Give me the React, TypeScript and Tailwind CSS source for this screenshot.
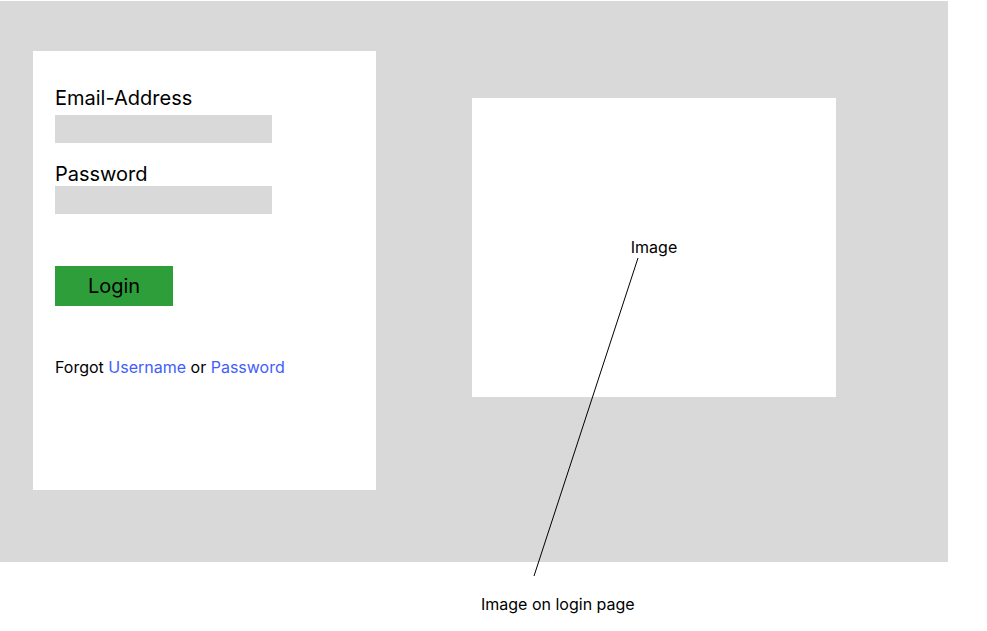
export default function App() {
  return (
    <main
      className="relative h-[631px] w-[987px] bg-white text-black"
      style={{ fontFamily: "Inter, 'Noto Sans', sans-serif" }}
    >
      {/* Gray canvas */}
      <section className="mt-px flex h-[561px] w-[948px] items-start bg-[#d9d9d9] pl-[33px] pt-[50px]">
        {/* Login card */}
        <div className="flex h-[439px] w-[343px] flex-col items-start bg-white pl-[22px] pt-[35px]">
          <label className="text-[20px] leading-[24px]">Email-Address</label>
          <div className="mt-[5px] h-[28px] w-[217px] bg-[#d9d9d9]" />
          <label className="mt-[19px] text-[20px] leading-[24px]">Password</label>
          <div className="h-[28px] w-[217px] bg-[#d9d9d9]" />
          <button className="mt-[52px] flex h-[40px] w-[118px] items-center justify-center bg-[#2e9e3a] text-[20px] leading-[24px] text-black">
            Login
          </button>
          <p className="mt-[49px] text-[16px] leading-[24px]">
            Forgot <span className="text-[#3f5efb]">Username</span> or{" "}
            <span className="text-[#3f5efb]">Password</span>
          </p>
        </div>

        {/* Image placeholder */}
        <div className="ml-[96px] mt-[47px] flex h-[299px] w-[364px] items-center justify-center bg-white pb-[1px]">
          <span className="text-[16px] leading-[24px]">Image</span>
        </div>
      </section>

      <p className="ml-[481px] mt-[30px] text-[16px] leading-[24px]">Image on login page</p>

      {/* Annotation line */}
      <svg className="pointer-events-none absolute left-0 top-0" width="987" height="631">
        <line x1="638" y1="257" x2="534" y2="575" stroke="#000" strokeWidth="1" />
      </svg>
    </main>
  );
}
